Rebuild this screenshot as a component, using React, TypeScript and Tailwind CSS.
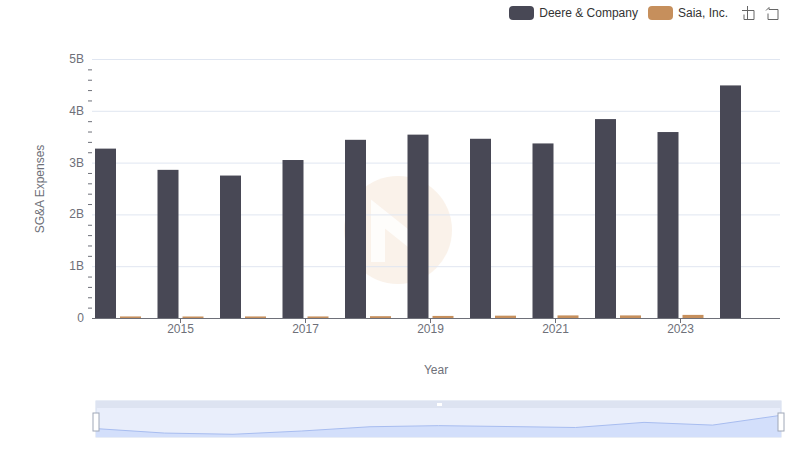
export default function App() {
  const deere = [3.27, 2.86, 2.75, 3.05, 3.44, 3.54, 3.46, 3.37, 3.84, 3.59, 4.49];
  const saia = [0.03, 0.025, 0.03, 0.03, 0.035, 0.04, 0.045, 0.05, 0.05, 0.06, 0.0];
  const x0 = 92, w = 62.5, y0 = 318, s = 51.8;
  const minors: number[] = [];
  for (let i = 1; i < 25; i++) if (i % 5) minors.push(i * 0.2);
  const pts = deere.map((d, i) => [96 + (685 * i) / 10, 437 - ((d - 2.5) / 2.2) * 24]);
  const line = pts.map((p, i) => `${i ? 'L' : 'M'}${p[0]},${p[1]}`).join(' ');
  return (
    <div className="w-[800px] h-[461px] bg-white relative" style={{ fontFamily: '"Liberation Sans", Arial, sans-serif' }}>
      <div className="flex justify-end items-center gap-[10px] pt-[4px] pr-[16px] text-[12px] text-[#333]">
        <div className="flex items-center gap-[5px]"><span className="w-[25px] h-[14px] rounded-[4px] bg-[#484855]" />Deere &amp; Company</div>
        <div className="flex items-center gap-[5px]"><span className="w-[25px] h-[14px] rounded-[4px] bg-[#c68f5c]" />Saia, Inc.</div>
        <svg width="46" height="18" viewBox="0 0 46 18" fill="none" stroke="#666" strokeWidth="1">
          <path d="M4 6.5h12M9.5 2v13M6 10.5v5h10v-9" />
          <path d="M28 6.5l3-3v2h9v10h-10v-6" />
        </svg>
      </div>
      <svg className="absolute left-0 top-0" width="800" height="461">
        <circle cx="398" cy="230" r="54" fill="#f6e6d6" opacity="0.5" />
        <path d="M378 262 L378 214 L418 246 L418 198" stroke="#fff" strokeWidth="14" fill="none" opacity="0.8" />
        {[1, 2, 3, 4, 5].map(v => <line key={v} x1={x0} x2={780} y1={y0 - v * s * 1 + 0.5} y2={y0 - v * s + 0.5} stroke="#e0e6f1" />)}
        {minors.map(v => <line key={v} x1={88} x2={92} y1={y0 - v * s + 0.5} y2={y0 - v * s + 0.5} stroke="#6e7079" />)}
        {[0, 1, 2, 3, 4, 5].map(v => <text key={v} x={84} y={y0 - v * s + 4} textAnchor="end" fontSize="12" fill="#6e7079">{v ? `${v}B` : '0'}</text>)}
        {deere.map((d, i) => <rect key={i} x={x0 + i * w + 3} y={y0 - d * s} width={21} height={d * s} fill="#484855" />)}
        {saia.map((d, i) => d > 0 && <rect key={'s' + i} x={x0 + i * w + 28} y={y0 - Math.max(d * s, 1.5)} width={21} height={Math.max(d * s, 1.5)} fill="#c68f5c" />)}
        <line x1={x0} x2={780} y1={318.5} y2={318.5} stroke="#6e7079" />
        {[1, 3, 5, 7, 9].map(i => (
          <g key={i}>
            <line x1={x0 + i * w + 26} x2={x0 + i * w + 26} y1={319} y2={323} stroke="#6e7079" />
            <text x={x0 + i * w + 26} y={333} textAnchor="middle" fontSize="12" fill="#6e7079">{2014 + i}</text>
          </g>
        ))}
        <text x={436} y={374} textAnchor="middle" fontSize="12" fill="#6e7079">Year</text>
        <text transform="translate(44 189) rotate(-90)" textAnchor="middle" fontSize="12" fill="#6e7079">SG&amp;A Expenses</text>
        <rect x={96} y={401} width={685} height={36} fill="#e9eefb" stroke="#d2dbee" />
        <rect x={96} y={401} width={685} height={7} fill="#dde3f1" />
        <path d={`${line} L781,437 L96,437 Z`} fill="#d3dffb" />
        <path d={line} stroke="#a8bdf0" fill="none" />
        <rect x={437} y={403} width={5} height={3} fill="#fff" />
        <rect x={93} y={413} width={6} height={18} fill="#fff" stroke="#a0a8b8" />
        <rect x={778} y={413} width={6} height={18} fill="#fff" stroke="#a0a8b8" />
      </svg>
    </div>
  );
}
